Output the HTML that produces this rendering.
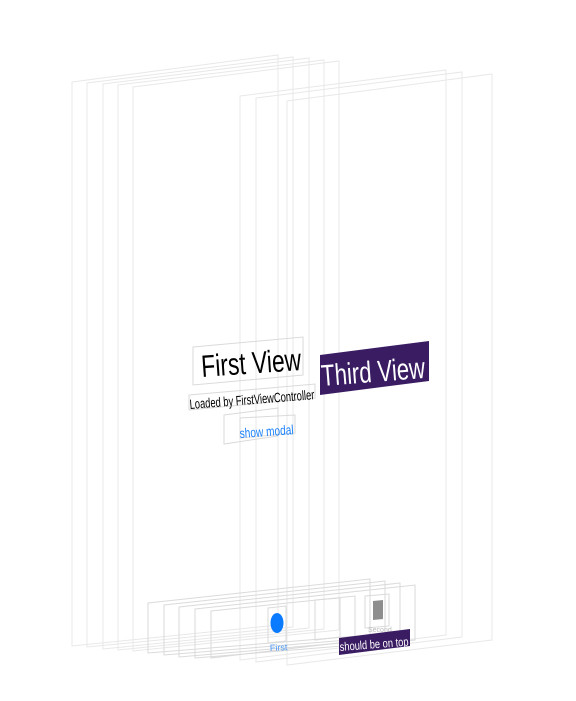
<!DOCTYPE html>
<html><head><meta charset="utf-8"><style>
html,body{margin:0;padding:0;background:#fff;width:576px;height:701px;overflow:hidden}
svg{display:block}
text{font-family:"Liberation Sans",sans-serif}
</style></head><body>
<svg width="576" height="701" viewBox="0 0 576 701" xmlns="http://www.w3.org/2000/svg">
<g fill="none" stroke="#e8e8e8" stroke-width="1">
  <polygon points="72,82 278,55 278,625 72,646"/>
  <polygon points="87,83 293,57 293,627 87,647"/>
  <polygon points="103,84 309,58 309,628 103,649"/>
  <polygon points="118,85 324,60 324,629 118,650"/>
  <polygon points="133,87 339,61 339,630 133,651"/>
  <polygon points="240,96 446,70 446,635 240,660"/>
  <polygon points="256,98 462,72 462,637 256,662"/>
  <polygon points="287,101 492,74 492,640 287,665"/>
</g>
<g fill="none" stroke="#dadada" stroke-width="1">
  <polygon points="148,603 370,579 370,635 148,653"/>
  <polygon points="164,605 385,581 385,637 164,655"/>
  <polygon points="179,607 400,583 400,638 179,657"/>
  <polygon points="195,609 415,585 415,640 195,658"/>
  <polygon points="211,611 355,596 355,641 211,658"/>
  <polygon points="268,608 286,606 286,641 268,643"/>
  <polygon points="315,600 340,598 340,637 315,640"/>
  <polygon points="365,596 389,594 389,626 365,628"/>
  <polygon points="193,347 303,337 303,375 193,385"/>
  <polygon points="189,395 315,384 315,398 189,410"/>
  <polygon points="224,415 278,408 278,436 224,444"/>
  <polygon points="240,418 295,415 295,433 240,438"/>
</g>
<ellipse cx="277" cy="623" rx="6.5" ry="10" fill="#0a7aff"/>
<polygon points="373,601 383,600 383,619 373,620" fill="#8e8e8e"/>
<text x="270" y="651" font-size="9" fill="#4a98f7" transform="rotate(-3 270 651)">First</text>
<text x="368" y="632" font-size="7" fill="#bbb">Second</text>
<text x="202" y="377" font-size="31" fill="#000" transform="rotate(-4 202 377)" textLength="100" lengthAdjust="spacingAndGlyphs">First View</text>
<text x="190" y="409" font-size="13.5" fill="#000" transform="rotate(-4.5 190 409)" textLength="125" lengthAdjust="spacingAndGlyphs">Loaded by FirstViewController</text>
<text x="240" y="438" font-size="13.5" fill="#1a82fb" transform="rotate(-4 240 438)" textLength="54" lengthAdjust="spacingAndGlyphs">show modal</text>
<polygon points="320,355 429,341 429,381 320,395" fill="#3a1c63"/>
<text x="322" y="386" font-size="30" fill="#fff" transform="rotate(-4.5 322 386)" textLength="104" lengthAdjust="spacingAndGlyphs">Third View</text>
<polygon points="339,638 410,629 410,646 339,655" fill="#3a1c63"/>
<text x="340" y="651" font-size="12" fill="#fff" transform="rotate(-4.5 340 651)" textLength="69" lengthAdjust="spacingAndGlyphs">should be on top</text>
</svg>
</body></html>
